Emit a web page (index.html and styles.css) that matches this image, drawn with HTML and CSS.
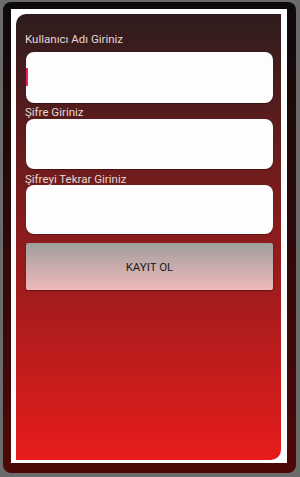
FILE: index.html
```html
<!DOCTYPE html>
<html lang="tr">
<head>
    <meta charset="UTF-8">
    <meta name="viewport" content="width=device-width, initial-scale=1.0">
    <title>Kayıt Ol</title>
    <link rel="stylesheet" href="styles.css">
</head>
<body>

    <div class="device">
        <div class="frame">
            <div class="panel">
                <label class="label" for="username">Kullanıcı Adı Giriniz</label>
                <div class="field field-first">
                    <span class="cursor"></span>
                    <input type="text" id="username">
                </div>

                <label class="label" for="password">Şifre Giriniz</label>
                <div class="field">
                    <input type="password" id="password">
                </div>

                <label class="label label-last" for="password2">Şifreyi Tekrar Giriniz</label>
                <div class="field field-last">
                    <input type="password" id="password2">
                </div>

                <button class="button">KAYIT OL</button>
            </div>
        </div>
    </div>

</body>
</html>
```

FILE: styles.css
```css
body {
    margin: 0;
    background-color: #6b6b6b;
    font-family: Roboto, "Liberation Sans", sans-serif;
}
.device {
    box-sizing: border-box;
    width: 293px;
    height: 471px;
    margin: 2px 0 0 3px;
    padding: 7px 9px 10px 8px;
    border-radius: 8px;
    background: linear-gradient(to bottom, #0e0a0a, #4e0808);
}
.frame {
    box-sizing: border-box;
    height: 100%;
    padding: 5px 6px 3px 5px;
    background-color: #fff;
}
.panel {
    box-sizing: border-box;
    height: 100%;
    padding: 20px 8px 0 10px;
    border-radius: 10px 0 10px 0;
    background: linear-gradient(to bottom, #2e1c1d, #e81c1c);
}
.label {
    display: block;
    margin: 4px 0 0 -1px;
    font-size: 11.5px;
    line-height: 11px;
    color: #e2dada;
}
.label:first-child {
    margin-top: 0;
}
.label-last {
    margin-top: 5px;
}
.field {
    position: relative;
    height: 50px;
    margin-top: 1px;
    border-radius: 8px;
    background-color: #fdfdfd;
    box-shadow: 0 1px 1px rgba(0, 0, 0, 0.35);
}
.field-first {
    height: 51px;
    margin-top: 7px;
}
.field-last {
    height: 49px;
    margin-top: 0;
}
.field input {
    box-sizing: border-box;
    width: 100%;
    height: 100%;
    border: none;
    background: transparent;
    outline: none;
}
.cursor {
    position: absolute;
    left: 0;
    top: 16px;
    width: 2px;
    height: 18px;
    background-color: #e91e63;
}
.button {
    display: block;
    width: 100%;
    height: 47px;
    margin-top: 9px;
    border: none;
    border-radius: 2px;
    background: linear-gradient(to bottom, #a09e9e, #f0b9b9);
    box-shadow: 0 1px 2px rgba(0, 0, 0, 0.4);
    font-family: Roboto, "Liberation Sans", sans-serif;
    font-size: 11.5px;
    color: #1c1c1c;
}
```
